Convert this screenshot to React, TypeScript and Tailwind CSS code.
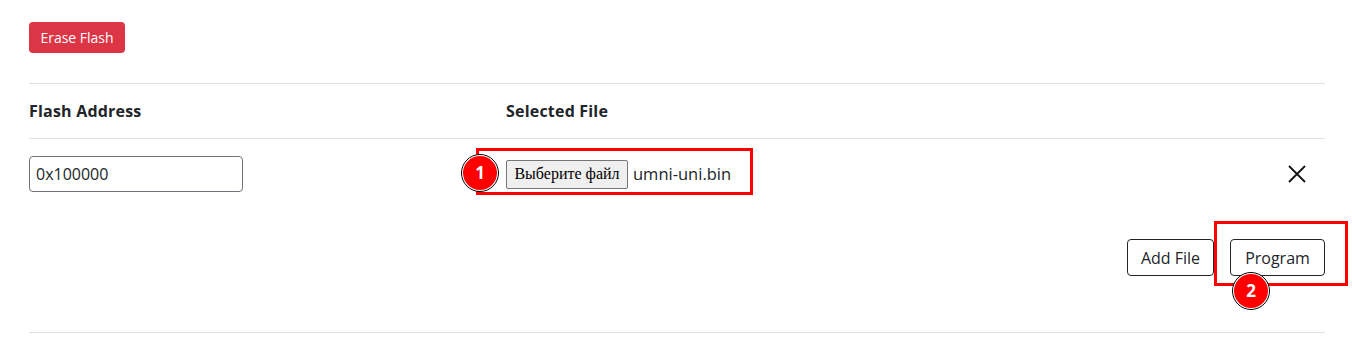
const App = () => {
  return (
    <div className="w-[1352px] h-[338px] bg-white font-['Open_Sans',sans-serif] text-[#212529] overflow-hidden">
      <div className="ml-[29px] pt-[22px] w-[1296px]">
        <button className="w-[96px] h-[31px] rounded-[4px] bg-[#dc3545] text-white text-[14px] leading-none">
          Erase Flash
        </button>

        <div className="mt-[30px] border-t border-[#dee2e6]">
          <div className="grid grid-cols-[477px_1fr] h-[55px] items-center border-b border-[#dee2e6]">
            <div className="font-bold text-[16px] tracking-[0.2px]">Flash Address</div>
            <div className="font-bold text-[16px] tracking-[0.2px]">Selected File</div>
          </div>

          <div className="grid grid-cols-[477px_1fr_auto] items-center pt-[17px] pb-[10px]">
            <input
              readOnly
              value="0x100000"
              className="w-[214px] h-[36px] px-[6px] rounded-[4px] border border-[#6c757d] text-[16px] outline-none"
            />
            <div className="relative flex items-center h-[36px]">
              <div className="absolute left-[-30px] top-[-8px] w-[277px] h-[47px] border-[3px] border-[#ff0000]"></div>
              <span className="relative h-[29px] w-[122px] flex items-center justify-center bg-[#efefef] border border-[#767676] rounded-[2px] font-['Liberation_Serif',serif] text-[16px] text-black">
                Выберите файл
              </span>
              <span className="relative ml-[5px] text-[16.5px]">umni-uni.bin</span>
              <div className="absolute left-[-45px] top-[-2px] w-[38px] h-[38px] rounded-full border border-black bg-white p-[1px]">
                <div className="w-full h-full rounded-full bg-[#ff0000] flex items-center justify-center text-white font-bold text-[17px]">
                  1
                </div>
              </div>
            </div>
            <div className="pr-[19px]">
              <svg width="18" height="18" viewBox="0 0 18 18" fill="none" stroke="#111" strokeWidth="1.8">
                <path d="M1 1 L17 17 M17 1 L1 17" />
              </svg>
            </div>
          </div>

          <div className="flex justify-end gap-[16px] pt-[37px] pb-[56px] border-b border-[#dee2e6]">
            <button className="w-[87px] h-[37px] rounded-[4px] border border-[#212529] text-[16px]">Add File</button>
            <div className="relative">
              <div className="absolute left-[-16px] top-[-18px] w-[134px] h-[65px] border-[3px] border-[#ff0000]"></div>
              <button className="relative w-[95px] h-[37px] rounded-[4px] border border-[#212529] bg-white text-[16px]">
                Program
              </button>
              <div className="absolute left-[2px] top-[33px] w-[38px] h-[38px] rounded-full border border-black bg-white p-[1px]">
                <div className="w-full h-full rounded-full bg-[#ff0000] flex items-center justify-center text-white font-bold text-[17px]">
                  2
                </div>
              </div>
            </div>
          </div>
        </div>
      </div>
    </div>
  );
};

export default App;
